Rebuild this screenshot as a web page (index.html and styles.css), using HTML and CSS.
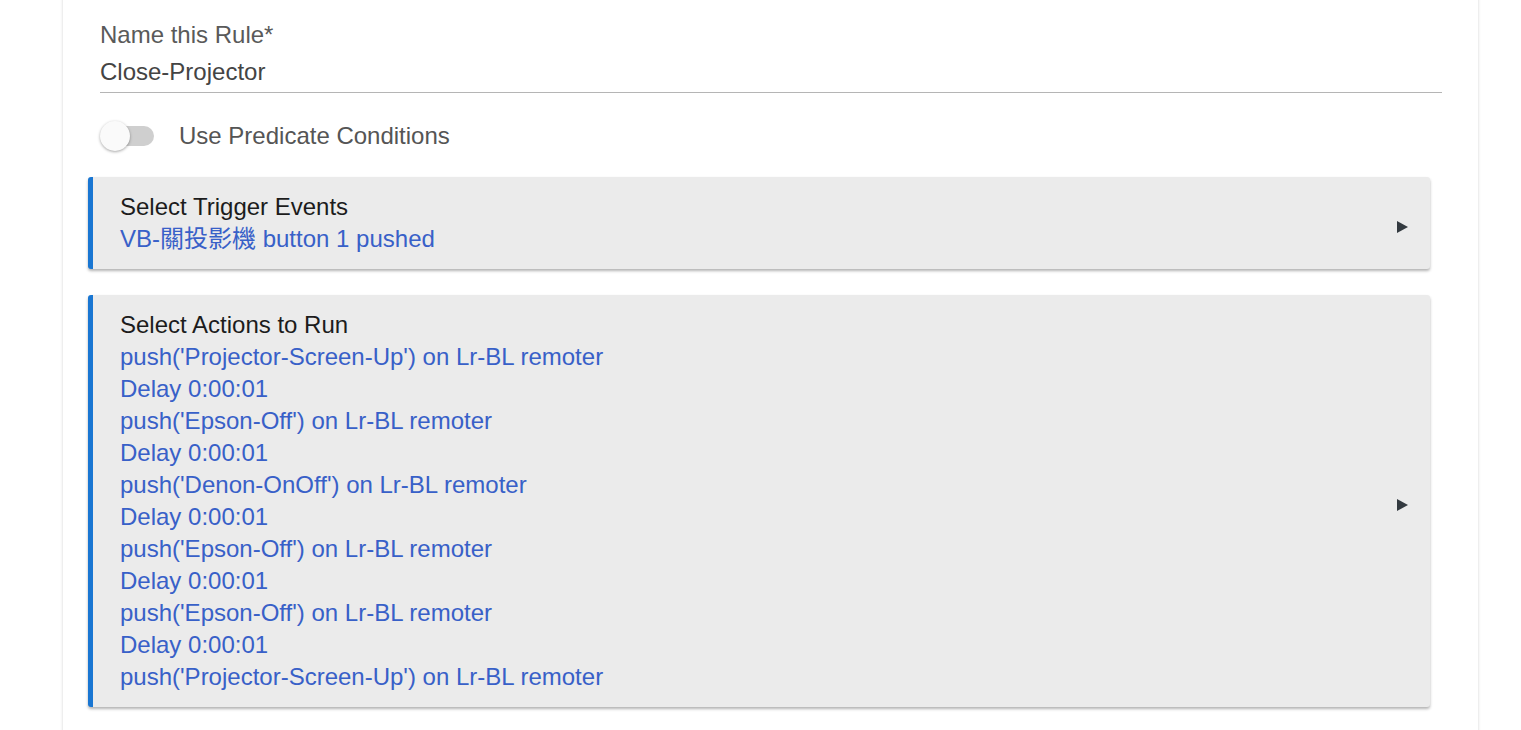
FILE: index.html
```html
<!DOCTYPE html>
<html>
<head>
<meta charset="utf-8">
<link rel="stylesheet" href="styles.css">
</head>
<body>
<div class="sheet">
  <div class="field">
    <div class="field-label">Name this Rule*</div>
    <div class="field-value">Close-Projector</div>
  </div>
  <div class="toggle-row">
    <span class="switch"><span class="track"></span><span class="thumb"></span></span>
    <span class="toggle-label">Use Predicate Conditions</span>
  </div>
  <div class="panel">
    <div class="panel-body">
      <div class="panel-title">Select Trigger Events</div>
      <div class="line">VB-關投影機 button 1 pushed</div>
    </div>
    <span class="arrow"></span>
  </div>
  <div class="panel">
    <div class="panel-body">
      <div class="panel-title">Select Actions to Run</div>
      <div class="line">push('Projector-Screen-Up') on Lr-BL remoter</div>
      <div class="line">Delay 0:00:01</div>
      <div class="line">push('Epson-Off') on Lr-BL remoter</div>
      <div class="line">Delay 0:00:01</div>
      <div class="line">push('Denon-OnOff') on Lr-BL remoter</div>
      <div class="line">Delay 0:00:01</div>
      <div class="line">push('Epson-Off') on Lr-BL remoter</div>
      <div class="line">Delay 0:00:01</div>
      <div class="line">push('Epson-Off') on Lr-BL remoter</div>
      <div class="line">Delay 0:00:01</div>
      <div class="line">push('Projector-Screen-Up') on Lr-BL remoter</div>
    </div>
    <span class="arrow"></span>
  </div>
</div>
</body>
</html>
```
FILE: styles.css
```css
html, body {
  margin: 0;
  padding: 0;
  background: #ffffff;
  overflow: hidden;
}
body {
  font-family: "Liberation Sans", "Noto Sans CJK TC", sans-serif;
  font-size: 24px;
}
.sheet {
  margin: -40px 0 0 63px;
  width: 1415px;
  box-sizing: border-box;
  padding: 59px 36px 60px 37px;
  background: #fff;
  box-shadow: 0 0 3px rgba(0,0,0,0.18);
  min-height: 900px;
}
.field {
  border-bottom: 1px solid #b5b5b5;
  padding-bottom: 4px;
}
.field-label {
  color: #5a5a5a;
  line-height: 32px;
}
.field-value {
  color: #444;
  line-height: 32px;
  margin-top: 5px;
}
.toggle-row {
  display: flex;
  align-items: center;
  height: 30px;
  margin-top: 28px;
}
.switch {
  position: relative;
  width: 56px;
  height: 30px;
  flex: none;
}
.track {
  position: absolute;
  left: 3px;
  top: 5px;
  width: 51px;
  height: 20px;
  border-radius: 10px;
  background: #cfcfcf;
}
.thumb {
  position: absolute;
  left: 0;
  top: 0;
  width: 30px;
  height: 30px;
  border-radius: 50%;
  background: #fafafa;
  box-shadow: 0 1px 3px rgba(0,0,0,0.35);
}
.toggle-label {
  margin-left: 23px;
  color: #555;
}
.panel {
  display: flex;
  align-items: center;
  margin: 26px 12px 0 -12px;
  background: #ebebeb;
  border-left: 5px solid #1976d2;
  border-radius: 3px;
  box-shadow: 0 2px 3px rgba(0,0,0,0.3);
  padding: 14px 22px 14px 27px;
}
.panel-body {
  flex: 1;
}
.panel-title {
  color: #1c1c1c;
  line-height: 32px;
}
.line {
  color: #3860c8;
  line-height: 32px;
}
.arrow {
  width: 0;
  height: 0;
  margin-top: 8px;
  border-top: 6.5px solid transparent;
  border-bottom: 6.5px solid transparent;
  border-left: 11px solid #333a40;
  flex: none;
}
```
